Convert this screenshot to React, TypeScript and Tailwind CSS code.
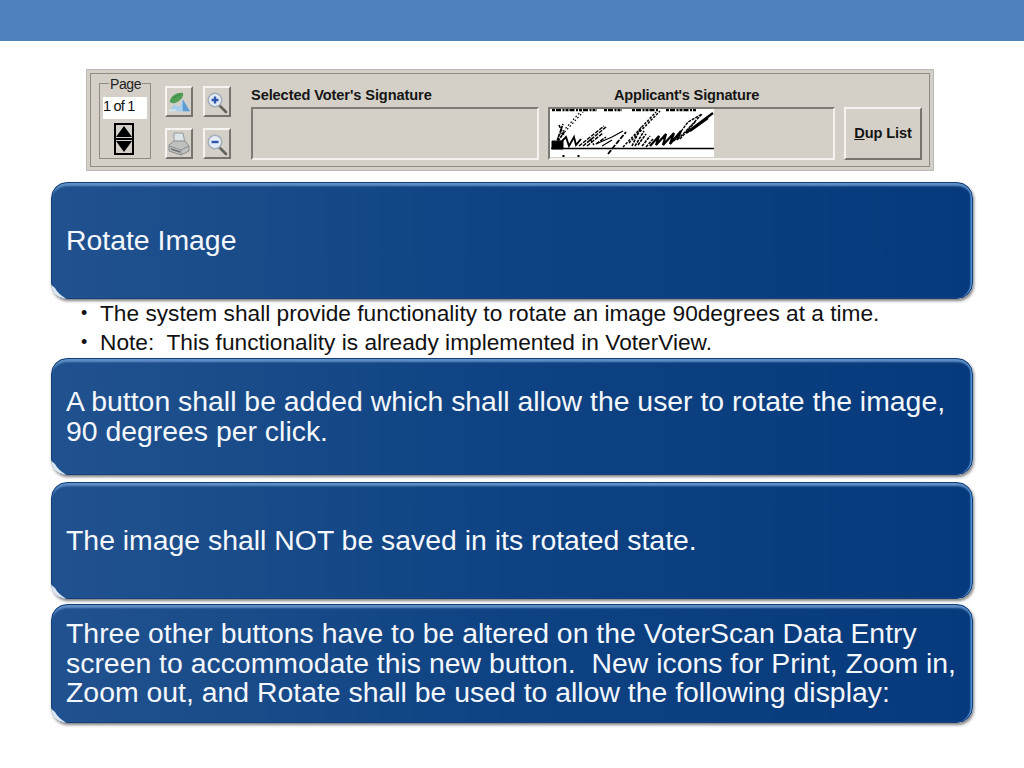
import React from "react";

const sunken = "border-2 border-t-[#7d7a74] border-l-[#7d7a74] border-r-[#f4f3f0] border-b-[#f4f3f0]";
const raised = "border-2 border-t-[#f5f4f1] border-l-[#f5f4f1] border-r-[#77746e] border-b-[#77746e]";

function Gloss({ className, children }: { className: string; children: React.ReactNode }) {
  return (
    <div className={`relative mx-[51px] flex items-center rounded-[16px] border border-[#123f78] bg-gradient-to-r from-[#21528f] via-[#0e4282] to-[#073a7c] pl-[14px] pr-[14px] font-['Liberation_Sans',Arial,sans-serif] text-[28.4px] leading-[29.5px] text-[#f4f7fb] shadow-[inset_0_5px_2px_-2px_#5f8fc6,inset_-2px_0_1px_-0.5px_#5b9ade,1px_2px_3px_rgba(60,60,60,0.65)] ${className}`}>
      <svg className="absolute bottom-[-1px] left-[-1px] h-[18px] w-[18px]" viewBox="0 0 18 18" fill="none">
        <path d="M0.5 4 C0.5 11 6 17 15 17.5 C10 15 6 11 4 7 Z" fill="#dce8f5" />
      </svg>
      <div>{children}</div>
    </div>
  );
}

function ZoomIcon({ plus }: { plus: boolean }) {
  return (
    <svg width="24" height="24" viewBox="0 0 24 24" fill="none">
      <path d="M14 15 L21 22" stroke="#62625a" strokeWidth="2.6" strokeLinecap="round" />
      <circle cx="10" cy="10" r="6.8" fill="#e4ecf5" stroke="#a3afba" strokeWidth="1.6" />
      <path d={plus ? "M6.5 10 H13.5 M10 6.5 V13.5" : "M6.5 10 H13.5"} stroke="#2f56ad" strokeWidth="2.4" />
    </svg>
  );
}

function RotateIcon() {
  return (
    <svg width="26" height="24" viewBox="0 0 26 24" fill="none">
      <path d="M3 22 L7 15 L14 17 L17 9 L25 22 Z" fill="#a9cdec" />
      <path d="M17 9 L25 22 H17 Z" fill="#5f9cd6" />
      <path d="M2 20 H10 L9 22 H2 Z" fill="#d5e6ea" />
      <path d="M3 11 C4 5 12 1 17 2 C19 5 15 11 9 13 C6 14 3 13 3 11 Z" fill="#4fa055" />
      <path d="M6 8 C9 6 12 5 15 3" stroke="#37803f" strokeWidth="1" />
    </svg>
  );
}

function PrintIcon() {
  return (
    <svg width="24" height="24" viewBox="0 0 24 24" fill="none">
      <path d="M7 1 L16 1 L18 11 L7 11 Z" fill="#dde4e8" stroke="#939a9e" />
      <path d="M2 13 L7 9 H18 L22 14 V19 L14 23 L2 19 Z" fill="#bfc1bf" stroke="#8a8d8c" />
      <path d="M2 14 L14 18 L22 14 M14 18 V23" stroke="#8a8e90" />
      <path d="M4 17 L13 20" stroke="#6d7072" strokeWidth="1.5" />
    </svg>
  );
}

function Signature() {
  return (
    <svg width="164" height="48" viewBox="0 0 164 48" className="bg-white blur-[0.35px]" fill="none" stroke="#000">
      <path d="M2 1 H47 M54 1 H72 M82 1 H108 M116 1 H146" strokeWidth="2.4" strokeDasharray="3 1 5 1.5 2 1" />
      <path d="M1 39.5 H164" strokeWidth="1.7" />
      <path d="M2 32 H13 V40 H2 Z" fill="#000" />
      <path d="M8 28 L31 2 M12 26 L33 3" strokeWidth="1.2" strokeDasharray="1.6 2.2" />
      <path d="M6 35 L13 15 M9 16 L14 27 M8 32 L15 22" strokeWidth="1.7" strokeDasharray="3 1" />
      <path d="M9 35 L16 28 L19 37 L24 28 L26 36 L31 30" strokeWidth="1.9" />
      <path d="M29 37 L54 17 M33 37 L56 18 M37 37 L53 24 M40 30 L44 36 M46 35 L56 28" strokeWidth="1.5" strokeDasharray="4 1.2" />
      <path d="M46 35 L62 28 L73 22 M52 37 L62 31" strokeWidth="1.2" />
      <path d="M58 45 L66 35 L76 23" strokeWidth="1.8" strokeDasharray="5 1.5" />
      <path d="M73 38 L106 3 M79 34 L110 2" strokeWidth="1.5" strokeDasharray="2.5 1.4" />
      <path d="M82 37 L91 18 M85 37 L94 22 M88 36 L96 25 M92 37 L100 27 M96 38 L103 30" strokeWidth="1.6" strokeDasharray="3 1" />
      <path d="M100 37 L109 27 L106 36 L116 25 L113 36 L124 24 L120 35 L131 22 L127 31" strokeWidth="2.2" />
      <path d="M124 32 L138 13 L152 5 L136 22 L128 30 M130 30 L146 12" strokeWidth="1.4" strokeDasharray="3 1" />
      <path d="M136 24 L163 4 M140 22 L158 9" strokeWidth="2.2" />
      <path d="M12.5 47 H14.5 M27.5 47 H29.5" strokeWidth="2" />
    </svg>
  );
}

export default function App() {
  return (
    <div className="h-[768px] w-[1024px] overflow-hidden bg-white font-['Liberation_Sans',Arial,sans-serif]">
      <div className="h-[41px] bg-[#4f81bd]" />

      <div className="mx-[86px] mt-[28px] h-[102px] w-[848px] border border-[#b9b9b5] bg-[#d4d0c8] p-[3px]">
        <div className="flex h-full border border-[#8f8c86] pl-[8px] pr-[11px] pt-[9px]">
          <div className="relative flex h-[76px] w-[52px] shrink-0 flex-col items-center border border-[#8f8c86] pt-[13px]">
            <span className="absolute left-[9px] top-[-7px] bg-[#d4d0c8] px-[1px] text-[14px] leading-[15px] tracking-[-0.4px] text-[#222]">Page</span>
            <div className="h-[22px] w-[44px] bg-white text-[14.5px] leading-[18px] tracking-[-0.8px] text-[#111]">1 of 1</div>
            <div className="mt-[4px] mr-[2px] flex h-[32px] w-[20px] flex-col items-center justify-center gap-[1px] border-2 border-black">
              <div className="h-0 w-0 border-x-[8px] border-b-[11px] border-x-transparent border-b-black" />
              <div className="h-[2px] w-full bg-black" />
              <div className="h-0 w-0 border-x-[8px] border-t-[11px] border-x-transparent border-t-black" />
            </div>
          </div>

          <div className="ml-[14px] mt-[3px] grid h-[73px] shrink-0 grid-cols-[28px_28px] grid-rows-[31px_31px] gap-x-[10px] gap-y-[11px]">
            <div className={`flex items-center justify-center ${raised}`}><RotateIcon /></div>
            <div className={`flex items-center justify-center ${raised}`}><ZoomIcon plus /></div>
            <div className={`flex items-center justify-center ${raised}`}><PrintIcon /></div>
            <div className={`flex items-center justify-center ${raised}`}><ZoomIcon plus={false} /></div>
          </div>

          <div className="ml-[20px] flex w-[288px] shrink-0 flex-col">
            <div className="h-[24px] pt-[4px] text-[14.6px] font-bold leading-[17px] tracking-[-0.1px] text-[#151515]">Selected Voter's Signature</div>
            <div className={`h-[53px] ${sunken}`} />
          </div>

          <div className="ml-[9px] flex w-[287px] shrink-0 flex-col">
            <div className="h-[24px] pr-[10px] pt-[4px] text-center text-[14.6px] font-bold leading-[17px] tracking-[-0.2px] text-[#151515]">Applicant's Signature</div>
            <div className={`h-[53px] ${sunken}`}>
              <Signature />
            </div>
          </div>

          <div className={`ml-[9px] mt-[24px] flex h-[53px] w-[78px] shrink-0 items-center justify-center text-[14.6px] font-bold tracking-[-0.1px] text-[#151515] ${raised}`}>
            <span><span className="underline">D</span>up List</span>
          </div>
        </div>
      </div>

      <Gloss className="mt-[11px] h-[117px]">Rotate Image</Gloss>

      <ul className="h-[59px] pl-[81px] text-[22.7px] leading-[29px] text-[#111]">
        <li className="flex"><span className="w-[19px] text-[18px]">•</span><span>The system shall provide functionality to rotate an image 90degrees at a time.</span></li>
        <li className="flex"><span className="w-[19px] text-[18px]">•</span><span>Note:&nbsp; This functionality is already implemented in VoterView.</span></li>
      </ul>

      <Gloss className="h-[117px]">A button shall be added which shall allow the user to rotate the image, 90 degrees per click.</Gloss>
      <Gloss className="mt-[7px] h-[117px]">The image shall NOT be saved in its rotated state.</Gloss>
      <Gloss className="mt-[5px] h-[119px]">Three other buttons have to be altered on the VoterScan Data Entry screen to accommodate this new button.&nbsp; New icons for Print, Zoom in, Zoom out, and Rotate shall be used to allow the following display:</Gloss>
    </div>
  );
}
